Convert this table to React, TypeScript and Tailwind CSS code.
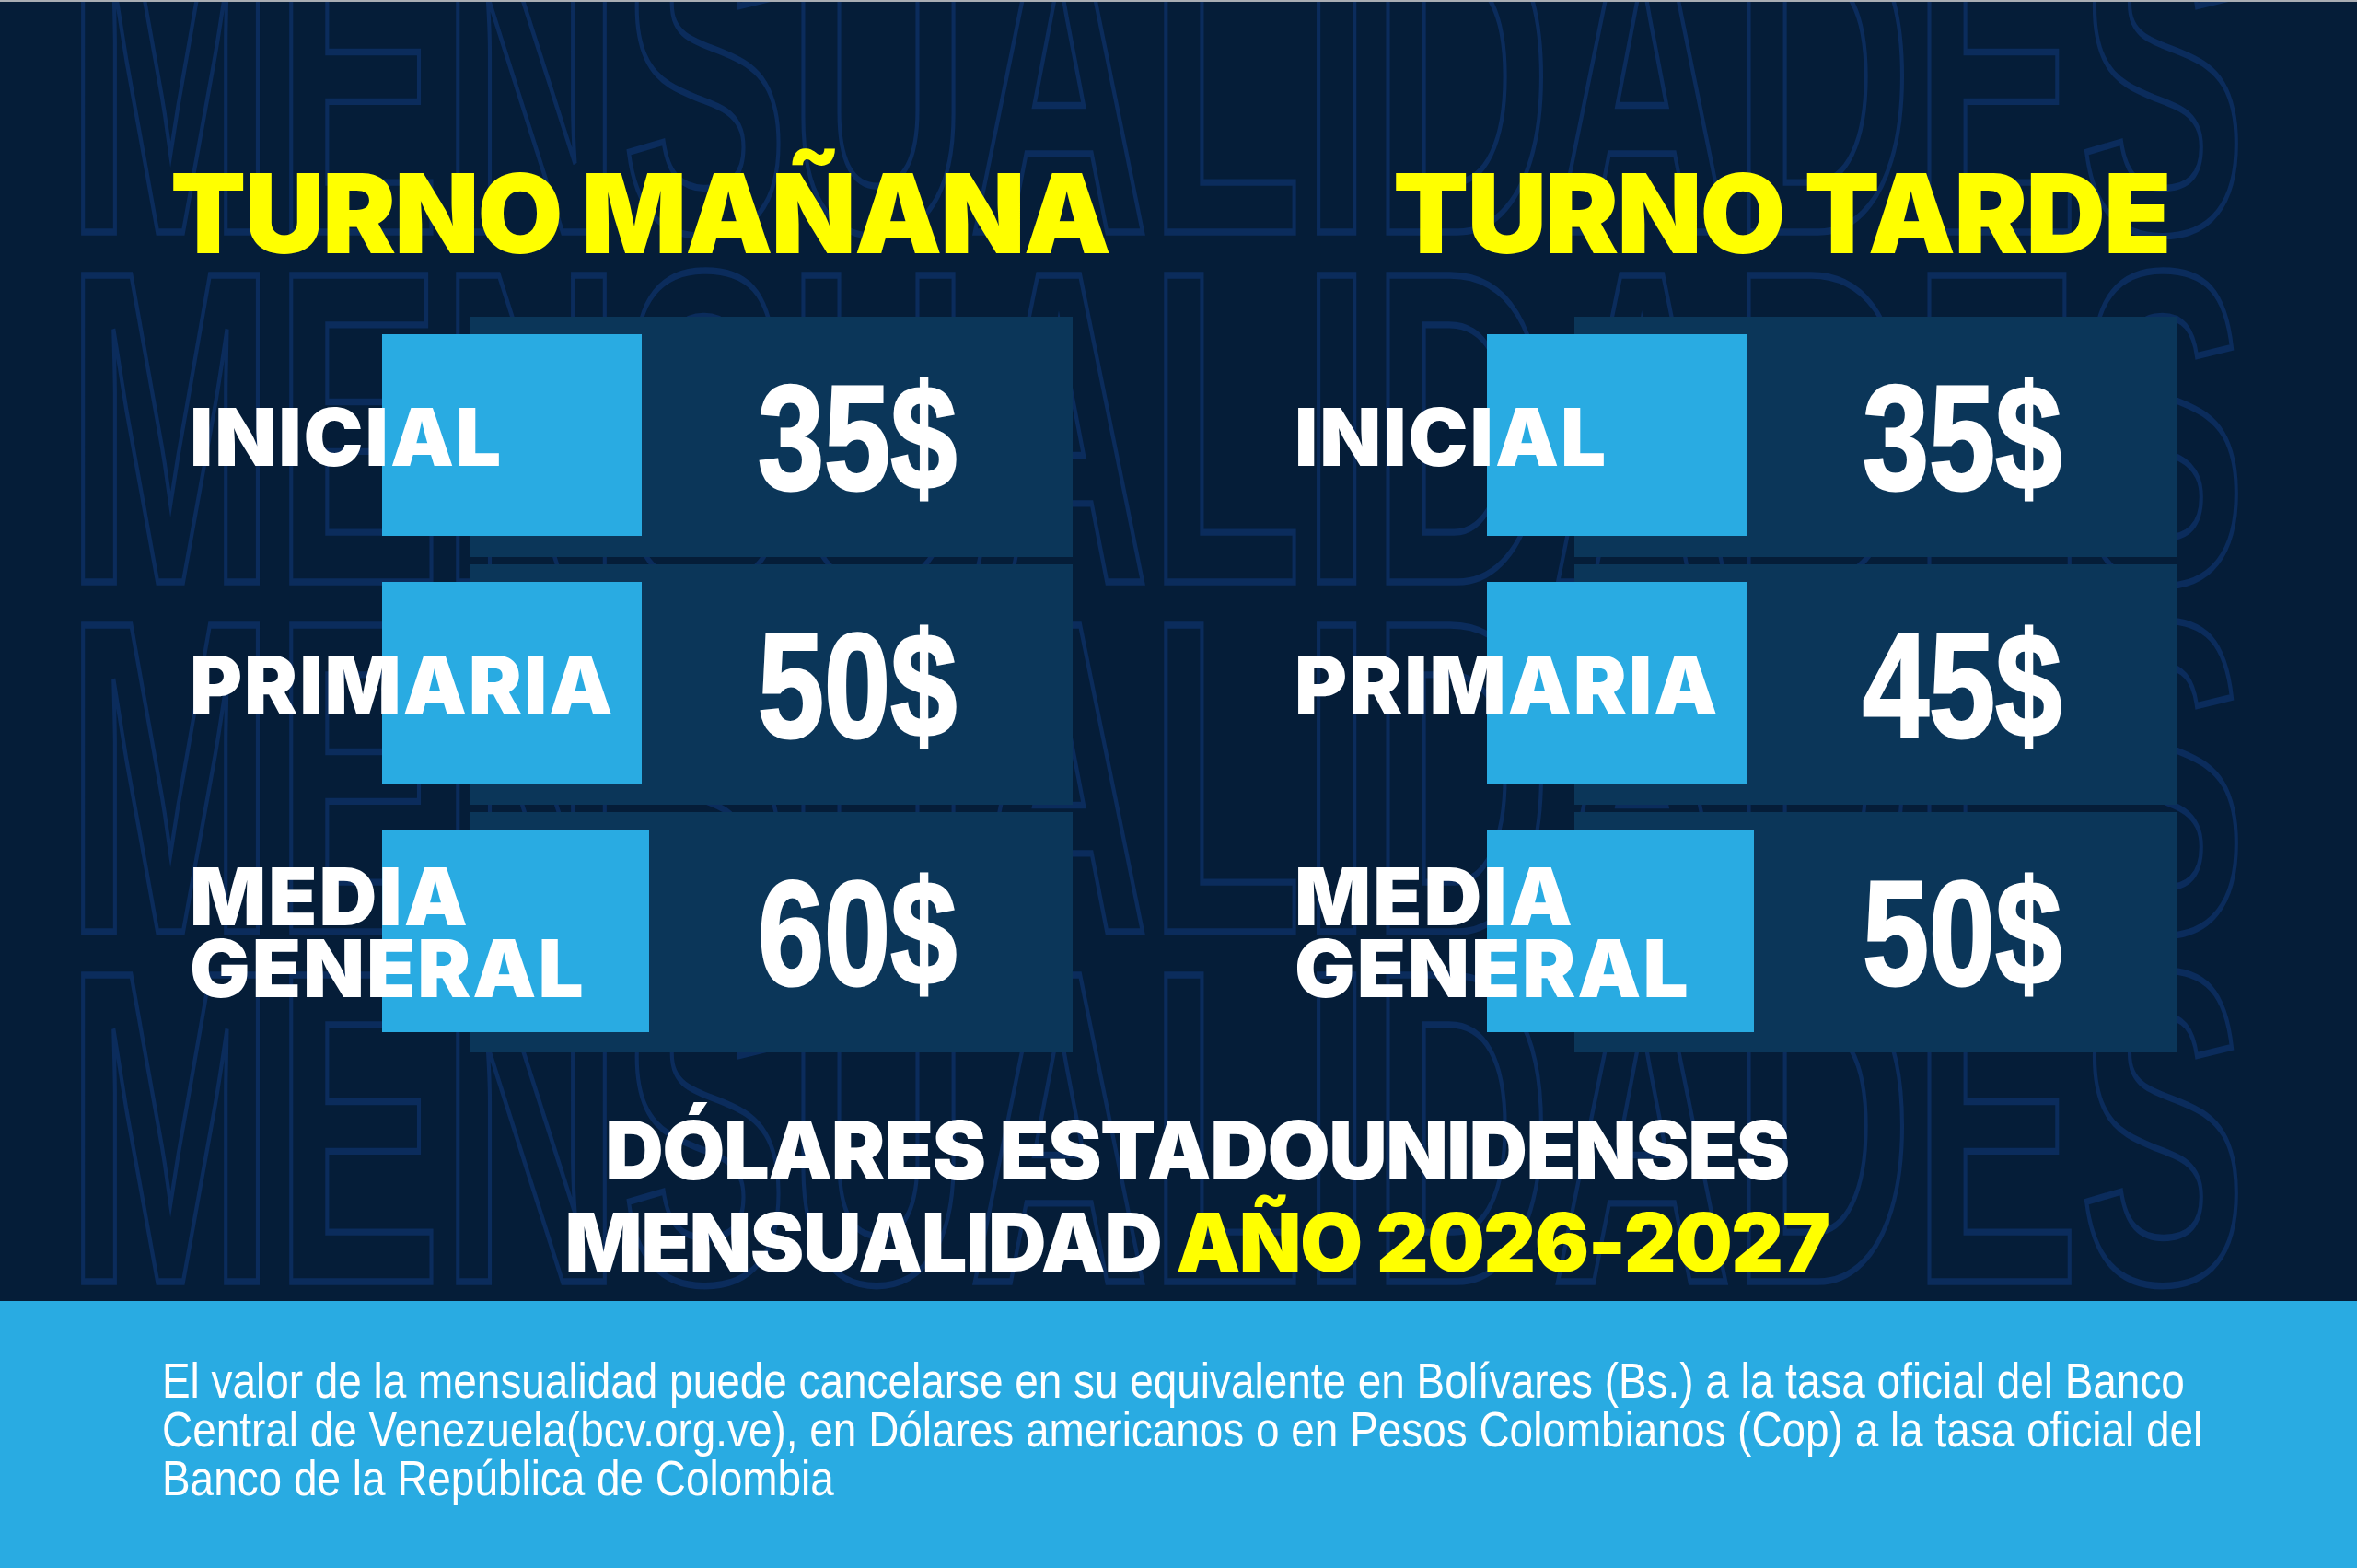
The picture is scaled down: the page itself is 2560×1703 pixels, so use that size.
import React from "react";

type Row = { label: string[]; price: string; wide?: boolean };

const columns: { title: string; headingOffset: string; rows: Row[] }[] = [
  {
    title: "TURNO MAÑANA",
    headingOffset: "ml-[185px]",
    rows: [
      { label: ["INICIAL"], price: "35$" },
      { label: ["PRIMARIA"], price: "50$" },
      { label: ["MEDIA", "GENERAL"], price: "60$", wide: true },
    ],
  },
  {
    title: "TURNO TARDE",
    headingOffset: "ml-[313px]",
    rows: [
      { label: ["INICIAL"], price: "35$" },
      { label: ["PRIMARIA"], price: "45$" },
      { label: ["MEDIA", "GENERAL"], price: "50$", wide: true },
    ],
  },
];

const heavy = "font-['Inter','Noto_Sans',sans-serif] font-black";
const arial = "font-['Liberation_Sans','Arial',sans-serif]";

function PriceRow({ row }: { row: Row }) {
  return (
    <div className="grid h-[261px] w-[959px]">
      <div className="ml-[304px] h-[261px] w-[655px] bg-[#0b3659] [grid-area:1/1]" />
      <div
        className={`mt-[19px] ml-[209px] bg-[#29abe2] [grid-area:1/1] ${
          row.wide ? "h-[220px] w-[290px]" : "h-[219px] w-[282px]"
        }`}
      />
      <div className={`self-center text-[87px] leading-[78px] tracking-[2px] text-white [grid-area:1/1] ${heavy}`}>
        {row.label.map((line) => (
          <div key={line}>{line}</div>
        ))}
      </div>
      <div className="ml-[491px] flex w-[468px] items-center justify-center [grid-area:1/1]">
        <span
          className={`inline-block scale-x-[0.8] text-[162px] font-bold leading-none text-white [-webkit-text-stroke:3px_#ffffff] ${arial}`}
        >
          {row.price}
        </span>
      </div>
    </div>
  );
}

export default function App() {
  return (
    <div className="relative h-[1703px] w-[2560px] overflow-hidden border-t-2 border-[#a9adb3] bg-[#051d38]">
      {/* outlined backdrop lettering */}
      <div className="absolute inset-x-0 top-0 -mt-[160px] flex flex-col">
        {[0, 1, 2, 3].map((i) => (
          <div key={i} className="h-[380px] pl-[72px]">
            <div
              className={`origin-top-left scale-x-[0.83] scale-y-[1.48] text-[327px] leading-none font-bold whitespace-nowrap text-transparent [-webkit-text-stroke:5px_#0b2c5c] ${arial}`}
            >
              MENSUALIDADES
            </div>
          </div>
        ))}
      </div>

      <div className="relative flex h-[1411px] flex-col">
        <div className="grid grid-cols-[1200px_1200px] pt-[170px]">
          {columns.map((col) => (
            <div key={col.title} className="flex flex-col">
              <h1
                className={`${col.headingOffset} text-[120px] leading-none tracking-[-2px] whitespace-nowrap text-[#ffff00] ${heavy}`}
              >
                {col.title}
              </h1>
              <div className="mt-[52px] ml-[206px] flex flex-col gap-[8px]">
                {col.rows.map((row) => (
                  <PriceRow key={row.price + row.label[0]} row={row} />
                ))}
              </div>
            </div>
          ))}
        </div>

        <div className={`mt-[56px] pl-[40px] text-center text-[88px] leading-[100px] tracking-[-1.5px] text-white ${heavy}`}>
          <div>DÓLARES ESTADOUNIDENSES</div>
          <div>
            MENSUALIDAD <span className="text-[#ffff00]">AÑO 2026-2027</span>
          </div>
        </div>
      </div>

      <div className="relative h-[292px] bg-[#29abe2] pt-[60px] pl-[176px]">
        <p
          className={`origin-left scale-x-[0.85] text-[54px] leading-[53px] whitespace-nowrap text-white ${arial}`}
        >
          El valor de la mensualidad puede cancelarse en su equivalente en Bolívares (Bs.) a la tasa oficial del Banco
          <br />
          Central de Venezuela(bcv.org.ve), en Dólares americanos o en Pesos Colombianos (Cop) a la tasa oficial del
          <br />
          Banco de la República de Colombia
        </p>
      </div>
    </div>
  );
}
